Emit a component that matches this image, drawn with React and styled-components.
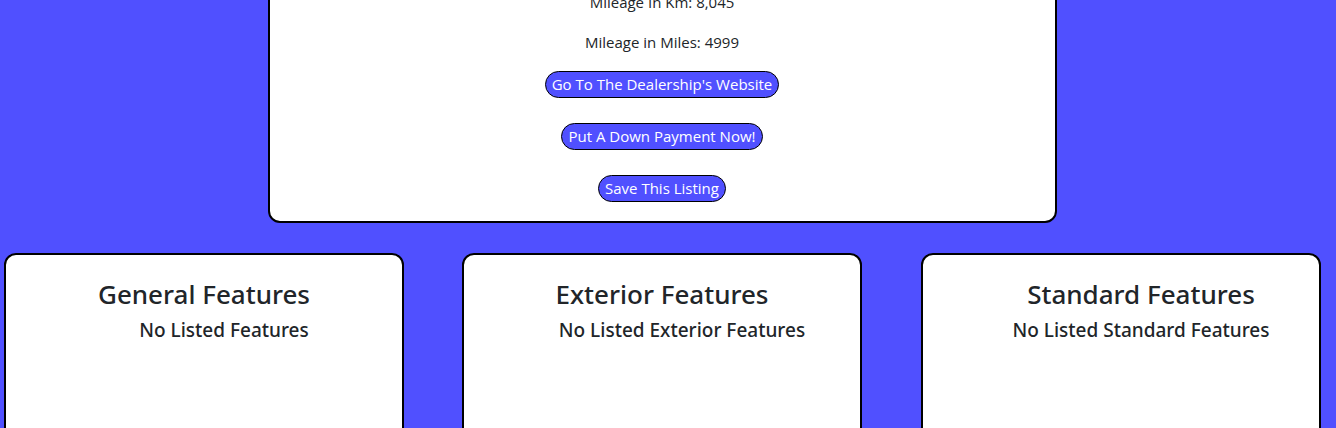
import React from "react";
import styled, { createGlobalStyle } from "styled-components";

const GlobalStyle = createGlobalStyle`
  html, body {
    margin: 0;
    padding: 0;
    background: #5050ff;
    overflow: hidden;
  }
  body {
    font-family: "Open Sans", "Noto Sans", sans-serif;
    color: #212529;
  }
`;

const features = [
  { title: "General Features", empty: "No Listed Features", shift: 0 },
  { title: "Exterior Features", empty: "No Listed Exterior Features", shift: 0 },
  { title: "Standard Features", empty: "No Listed Standard Features", shift: 20 },
];

const App = () => {
  return (
    <Page>
      <GlobalStyle />
      <DetailCard>
        <Line>Mileage In Km: 8,045</Line>
        <Line>Mileage in Miles: 4999</Line>
        <Actions>
          <PillButton>Go To The Dealership's Website</PillButton>
          <PillButton>Put A Down Payment Now!</PillButton>
          <PillButton>Save This Listing</PillButton>
        </Actions>
      </DetailCard>
      <FeatureRow>
        {features.map((f) => (
          <FeatureCard key={f.title}>
            <FeatureTitle shift={f.shift}>{f.title}</FeatureTitle>
            <FeatureList>
              <EmptyText>{f.empty}</EmptyText>
            </FeatureList>
          </FeatureCard>
        ))}
      </FeatureRow>
    </Page>
  );
};
export default App;

const Page = styled.div`
  width: 1324px;
  display: flex;
  flex-direction: column;
  align-items: center;
  margin-top: -32px;
`;
const DetailCard = styled.div`
  width: 789px;
  box-sizing: border-box;
  background: #fff;
  border: 2px solid #000;
  border-radius: 12px;
  display: flex;
  flex-direction: column;
  align-items: center;
  padding: 20px 0 19px;
`;
const Line = styled.p`
  margin: 0 0 16px;
  font-size: 15px;
  line-height: 24px;
  &:last-of-type {
    margin-bottom: 17px;
  }
`;
const Actions = styled.div`
  display: flex;
  flex-direction: column;
  align-items: center;
  gap: 25px;
`;
const PillButton = styled.button`
  font-family: inherit;
  font-size: 15px;
  line-height: 19px;
  height: 27px;
  padding: 3px 6px;
  color: #fff;
  background: #5050ff;
  border: 1px solid #000;
  border-radius: 14px;
  cursor: pointer;
`;
const FeatureRow = styled.div`
  align-self: stretch;
  display: flex;
  gap: 58px;
  padding-left: 4px;
  margin-top: 30px;
`;
const FeatureCard = styled.div`
  width: 400px;
  height: 200px;
  box-sizing: border-box;
  background: #fff;
  border: 2px solid #000;
  border-radius: 12px;
  padding-top: 24px;
  text-align: center;
  &:last-child {
    margin-left: 1px;
  }
`;
const FeatureTitle = styled.h3`
  margin: 0 0 8px;
  padding-left: ${(p) => p.shift * 2}px;
  font-family: "Noto Sans", "Open Sans", sans-serif;
  font-size: 26px;
  font-weight: 500;
  line-height: 1.2;
`;
const FeatureList = styled.ul`
  margin: 0;
  padding-left: 40px;
  list-style: none;
`;
const EmptyText = styled.h5`
  margin: 0;
  font-family: "Noto Sans", "Open Sans", sans-serif;
  font-size: 19px;
  font-weight: 500;
  line-height: 24px;
`;
